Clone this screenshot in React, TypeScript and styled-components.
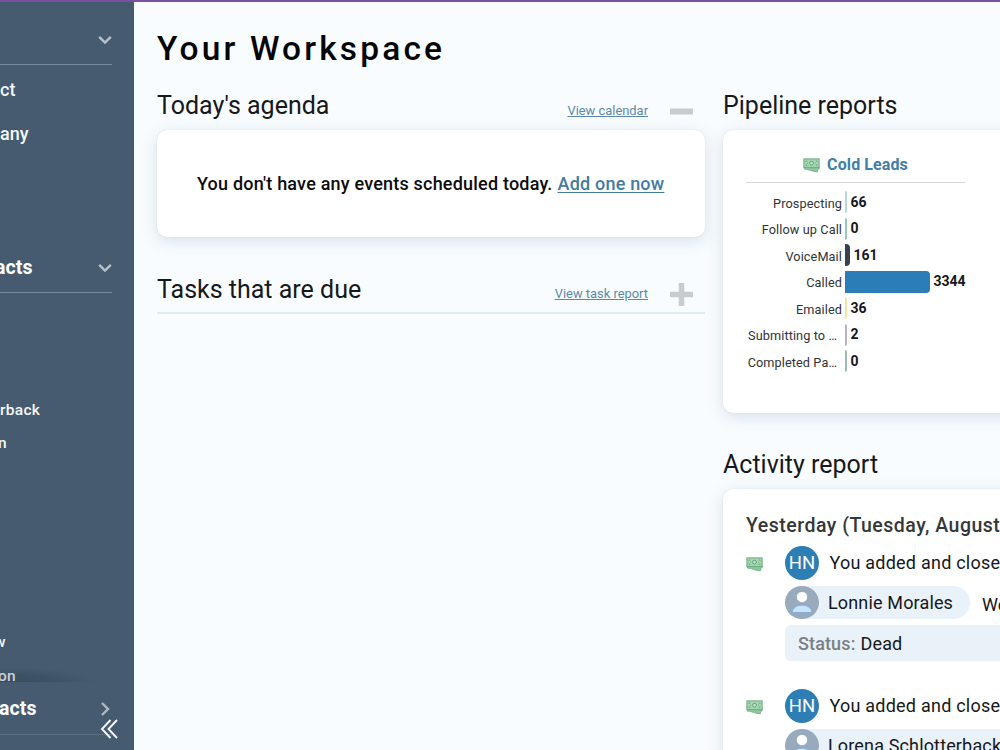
import React from "react";
import styled, { createGlobalStyle } from "styled-components";

const GlobalStyle = createGlobalStyle`
  * { box-sizing: border-box; }
  html, body { margin: 0; padding: 0; height: 750px; overflow: hidden; }
  body { font-family: Roboto, "Liberation Sans", sans-serif; color: #16181a; background: #f8fcff; }
`;

const Page = styled.div`
  display: flex;
  width: 1000px;
  height: 750px;
  overflow: hidden;
  border-top: 2px solid #7951a3;
`;

const Sidebar = styled.nav`
  flex: none;
  width: 134px;
  height: 748px;
  overflow: hidden;
  background: #465b70;
  color: #f4f7fa;
`;

const Group = styled.div<{ $height: number }>`
  height: ${(p) => p.$height}px;
`;

const GroupHeader = styled.div<{ $height: number; $drop?: number; $line?: string }>`
  display: flex;
  align-items: center;
  justify-content: space-between;
  width: 112px;
  height: ${(p) => p.$height}px;
  padding-top: ${(p) => p.$drop || 0}px;
  border-bottom: 1px solid ${(p) => p.$line || "#75879a"};
`;

const GroupTitle = styled.span<{ $shift: number }>`
  margin-left: ${(p) => p.$shift}px;
  font-size: 19.5px;
  font-weight: 700;
  line-height: 24px;
  letter-spacing: 0.1px;
  color: #fff;
`;

const Chevron = styled.svg`
  display: block;
  flex: none;
  margin-left: auto;
`;

const NavItem = styled.div<{ $height: number; $small?: boolean; $shift?: number }>`
  display: flex;
  align-items: center;
  height: ${(p) => p.$height}px;
  text-indent: ${(p) => p.$shift || 0}px;
  font-size: ${(p) => (p.$small ? 15.5 : 18)}px;
  font-weight: 500;
  letter-spacing: ${(p) => (p.$small ? 0.3 : 0)}px;
`;

const FadedItem = styled(NavItem)`
  width: 96px;
  padding-top: 10px;
  color: #c9d1d9;
  background: radial-gradient(ellipse 96px 15px at 0 100%, #384c5f 0%, #3e5265 55%, rgba(70, 91, 112, 0) 100%);
`;

const LastGroup = styled.div`
  position: relative;
  height: 66px;
`;

const Collapse = styled.svg`
  position: absolute;
  left: 100px;
  top: 36px;
`;

const Content = styled.main`
  flex: none;
  width: 1000px;
  padding: 25px 0 0 23px;
  background: #f8fcff;
`;

const Title = styled.h1`
  margin: 0;
  height: 44px;
  font-size: 33.5px;
  font-weight: 500;
  line-height: 44px;
  letter-spacing: 3.15px;
  color: #050505;
  white-space: nowrap;
`;

const Columns = styled.div`
  display: flex;
  gap: 18px;
  padding-top: 16px;
`;

const LeftColumn = styled.section`
  flex: none;
  width: 548px;
`;

const RightColumn = styled.section`
  width: 400px;
  flex: none;
`;

const SectionHead = styled.header<{ $height: number; $ruled?: boolean }>`
  display: flex;
  align-items: flex-start;
  height: ${(p) => p.$height}px;
  border-bottom: ${(p) => (p.$ruled ? "2px solid #dfebef" : "none")};
`;

const SectionTitle = styled.h2<{ $drop?: number }>`
  margin: 0;
  padding-top: ${(p) => p.$drop ?? 1}px;
  flex: 1;
  font-size: 25px;
  font-weight: 400;
  line-height: 36px;
  white-space: nowrap;
`;

const HeadLink = styled.a`
  padding-top: 15px;
  font-size: 12.9px;
  line-height: 18px;
  color: #5c8aa5;
  text-decoration: underline;
`;

const Toggle = styled.svg`
  display: block;
  margin: 13px 12px 0 22px;
`;

const Card = styled.div<{ $height: number }>`
  height: ${(p) => p.$height}px;
  border-radius: 10px;
  background: #fff;
  box-shadow: 0 0 1px rgba(70, 110, 130, 0.25), 0 4px 16px rgba(60, 90, 110, 0.17);
`;

const AgendaCard = styled(Card)`
  display: flex;
  align-items: center;
  padding-left: 40px;
  margin-bottom: 33px;
  font-size: 18px;
  font-weight: 500;
  letter-spacing: 0.2px;
  white-space: nowrap;
  color: #0c0c0d;
`;

const AddLink = styled.a`
  margin-left: 5px;
  color: #427ca2;
  text-decoration: underline;
  text-underline-offset: 2px;
`;

const PipelineCard = styled(Card)`
  padding: 17px 0 0 23px;
  margin-bottom: 33px;
`;

const PipelineName = styled.div`
  display: flex;
  align-items: center;
  justify-content: center;
  gap: 7px;
  width: 219px;
  height: 36px;
  border-bottom: 1px solid #d4d8da;
  font-size: 16px;
  font-weight: 700;
  letter-spacing: 0.1px;
  color: #4180a8;
`;

const Chart = styled.div`
  padding-top: 6px;
`;

const ChartRow = styled.div`
  display: flex;
  height: 26.5px;
  align-items: center;
`;

const RowLabel = styled.div<{ $cut?: boolean }>`
  width: 96px;
  padding-top: 3px;
  padding-right: ${(p) => (p.$cut ? 5 : 0)}px;
  font-size: 12.7px;
  line-height: 18px;
  letter-spacing: 0.1px;
  text-align: right;
  white-space: nowrap;
  color: #303437;
`;

const Bar = styled.div<{ $color: string }>`
  height: 22px;
  margin-left: 3px;
  border-radius: 0 4px 4px 0;
  background: ${(p) => p.$color};
`;

const RowValue = styled.div`
  margin-left: 3.5px;
  padding-bottom: 1px;
  font-size: 14px;
  font-weight: 700;
  line-height: 18px;
`;

const ActivityCard = styled(Card)`
  padding: 24px 0 0 23px;
`;

const DayTitle = styled.h3`
  margin: 0 0 7px;
  font-size: 19.5px;
  font-weight: 500;
  line-height: 26px;
  letter-spacing: 0.5px;
  white-space: nowrap;
  color: #34373a;
`;

const Entry = styled.article`
  display: flex;
  height: 143px;
`;

const EntryIcon = styled.div`
  flex: none;
  width: 39px;
  padding: 9px 0 0 0;
`;

const EntryBody = styled.div`
  flex: 1;
  white-space: nowrap;
  font-size: 18px;
`;

const EntryLine = styled.div`
  display: flex;
  align-items: center;
  height: 34px;
  gap: 10.5px;
  margin-bottom: 6px;
  letter-spacing: 0.23px;
`;

const EntryText = styled.span`
  padding-bottom: 1px;
`;

const Initials = styled.div`
  display: flex;
  align-items: center;
  justify-content: center;
  width: 34px;
  height: 34px;
  border-radius: 50%;
  background: #2d7eb4;
  color: #fff;
  font-size: 18.5px;
  letter-spacing: 0;
`;

const PersonLine = styled.div`
  display: flex;
  align-items: center;
  height: 33px;
  margin-bottom: 6px;
`;

const PersonChip = styled.div`
  display: flex;
  align-items: center;
  height: 33px;
  padding-right: 17px;
  border-radius: 17px;
  background: #e9f1f9;
  letter-spacing: 0.15px;
`;

const PersonIcon = styled.svg`
  display: block;
  margin-right: 9px;
`;

const Reason = styled.span`
  padding: 4px 0 0 12px;
`;

const Status = styled.div`
  display: flex;
  align-items: center;
  gap: 5px;
  width: 300px;
  height: 36px;
  padding-left: 13px;
  border-radius: 6px;
  background: #e9f1f9;
  letter-spacing: 0.13px;
`;

const StatusLabel = styled.span`
  font-weight: 500;
  color: #7a8086;
`;

const MoneyIcon = styled.svg`
  display: block;
`;

const DownIcon = () => (
  <Chevron width="14" height="10" viewBox="0 0 14 10">
    <path d="M1.2 1.8 7 7.6l5.800-5.800" fill="none" stroke="#b7c1cb" strokeWidth="2.4" />
  </Chevron>
);

const Money = () => (
  <MoneyIcon width="17" height="18" viewBox="0 0 17 18">
    <path d="M1.300 10.500v2.600c2.600.1 4.400.7 6.500 1.400 2.400.8 4.300 1.200 6.600 1.300l.5-2.800h1.200v-2.500z" fill="#8cc69d" stroke="#6fb184" strokeWidth=".8" />
    <rect x=".9" y="2.900" width="15.200" height="8.600" fill="#a5d6b1" stroke="#6fb184" strokeWidth="1.100" />
    <circle cx="8.500" cy="7.200" r="1.900" fill="#c2e6ca" stroke="#5d9e72" strokeWidth="1" />
    <path d="M3 6V5h1.200M3 8.400v1h1.200M14 6V5h-1.200M14 8.400v1h-1.200M4 7.200h1M12 7.200h1" fill="none" stroke="#6aab7e" strokeWidth=".9" />
  </MoneyIcon>
);

const Avatar = () => (
  <PersonIcon width="34" height="33" viewBox="0 0 34 33">
    <ellipse cx="17" cy="16.500" rx="17" ry="16.500" fill="#9aaabd" />
    <path d="M7 26.500c.6-4.600 4.500-7.300 10-7.300s9.400 2.700 10 7.300z" fill="#c5e3fa" stroke="#7fa9d2" strokeWidth=".8" />
    <circle cx="17" cy="11" r="5.600" fill="#fff" stroke="#85a4c5" strokeWidth=".7" />
  </PersonIcon>
);

const stages = [
  { label: "Prospecting", value: 66, width: 2, color: "#b5d9d0" },
  { label: "Follow up Call", value: 0, width: 2, color: "#93cbbb" },
  { label: "VoiceMail", value: 161, width: 5, color: "#36424f" },
  { label: "Called", value: 3344, width: 85, color: "#2a7db6" },
  { label: "Emailed", value: 36, width: 2, color: "#eee6a2" },
  { label: "Submitting to …", value: 2, width: 2, color: "#bbb0c5", cut: true },
  { label: "Completed Pa…", value: 0, width: 2, color: "#9bbcb0", cut: true },
];

const ActivityEntry = ({ person }: { person: string }) => (
  <Entry>
    <EntryIcon><Money /></EntryIcon>
    <EntryBody>
      <EntryLine><Initials>HN</Initials><EntryText>You added and closed</EntryText></EntryLine>
      <PersonLine>
        <PersonChip><Avatar />{person}</PersonChip>
        <Reason>We</Reason>
      </PersonLine>
      <Status><StatusLabel>Status:</StatusLabel>Dead</Status>
    </EntryBody>
  </Entry>
);

export default function App() {
  return (
    <>
      <GlobalStyle />
      <Page>
        <Sidebar>
          <Group $height={228}>
            <GroupHeader $height={63} $drop={13}><DownIcon /></GroupHeader>
            <NavItem $height={48}>ct</NavItem>
            <NavItem $height={40}>any</NavItem>
          </Group>
          <Group $height={452}>
            <GroupHeader $height={63} $drop={14}><GroupTitle $shift={-5}>acts</GroupTitle><DownIcon /></GroupHeader>
            <NavItem $height={100} $small />
            <NavItem $height={33} $small>rback</NavItem>
            <NavItem $height={33} $small $shift={-2}>n</NavItem>
            <NavItem $height={165} $small />
            <NavItem $height={35} $small $shift={-6}>w</NavItem>
            <FadedItem $height={23} $small $shift={-2}>on</FadedItem>
          </Group>
          <LastGroup>
            <GroupHeader $height={53} $drop={2} $line="#5c7085">
              <GroupTitle $shift={-1}>acts</GroupTitle>
              <Chevron width="12" height="16" viewBox="0 0 12 16">
                <path d="M2 2l6 6-6 6" fill="none" stroke="#aebac5" strokeWidth="2.400" />
              </Chevron>
            </GroupHeader>
            <Collapse width="19" height="22" viewBox="0 0 19 22">
              <path d="M10.500 2 2 11l8.500 9M17 2l-8.500 9 8.500 9" fill="none" stroke="#f4f7fa" strokeWidth="1.900" />
            </Collapse>
          </LastGroup>
        </Sidebar>
        <Content>
          <Title>Your Workspace</Title>
          <Columns>
            <LeftColumn>
              <SectionHead $height={43}>
                <SectionTitle>Today's agenda</SectionTitle>
                <HeadLink>View calendar</HeadLink>
                <Toggle width="23" height="23" viewBox="0 0 23 23">
                  <path d="M0 11.500h23" stroke="#c9cccd" strokeWidth="6" />
                </Toggle>
              </SectionHead>
              <AgendaCard $height={107}>
                You don't have any events scheduled today. <AddLink>Add one now</AddLink>
              </AgendaCard>
              <SectionHead $height={44} $ruled>
                <SectionTitle $drop={2}>Tasks that are due</SectionTitle>
                <HeadLink>View task report</HeadLink>
                <Toggle width="23" height="23" viewBox="0 0 23 23">
                  <path d="M0 11.500h23M11.500 0v23" stroke="#c9cccd" strokeWidth="5.500" />
                </Toggle>
              </SectionHead>
            </LeftColumn>
            <RightColumn>
              <SectionHead $height={43}><SectionTitle>Pipeline reports</SectionTitle></SectionHead>
              <PipelineCard $height={283}>
                <PipelineName><Money />Cold Leads</PipelineName>
                <Chart>
                  {stages.map((s) => (
                    <ChartRow key={s.label}>
                      <RowLabel $cut={s.cut}>{s.label}</RowLabel>
                      <Bar $color={s.color} style={{ width: s.width }} />
                      <RowValue>{s.value}</RowValue>
                    </ChartRow>
                  ))}
                </Chart>
              </PipelineCard>
              <SectionHead $height={43}><SectionTitle>Activity report</SectionTitle></SectionHead>
              <ActivityCard $height={400}>
                <DayTitle>Yesterday (Tuesday, August</DayTitle>
                <ActivityEntry person="Lonnie Morales" />
                <ActivityEntry person="Lorena Schlotterback" />
              </ActivityCard>
            </RightColumn>
          </Columns>
        </Content>
      </Page>
    </>
  );
}
